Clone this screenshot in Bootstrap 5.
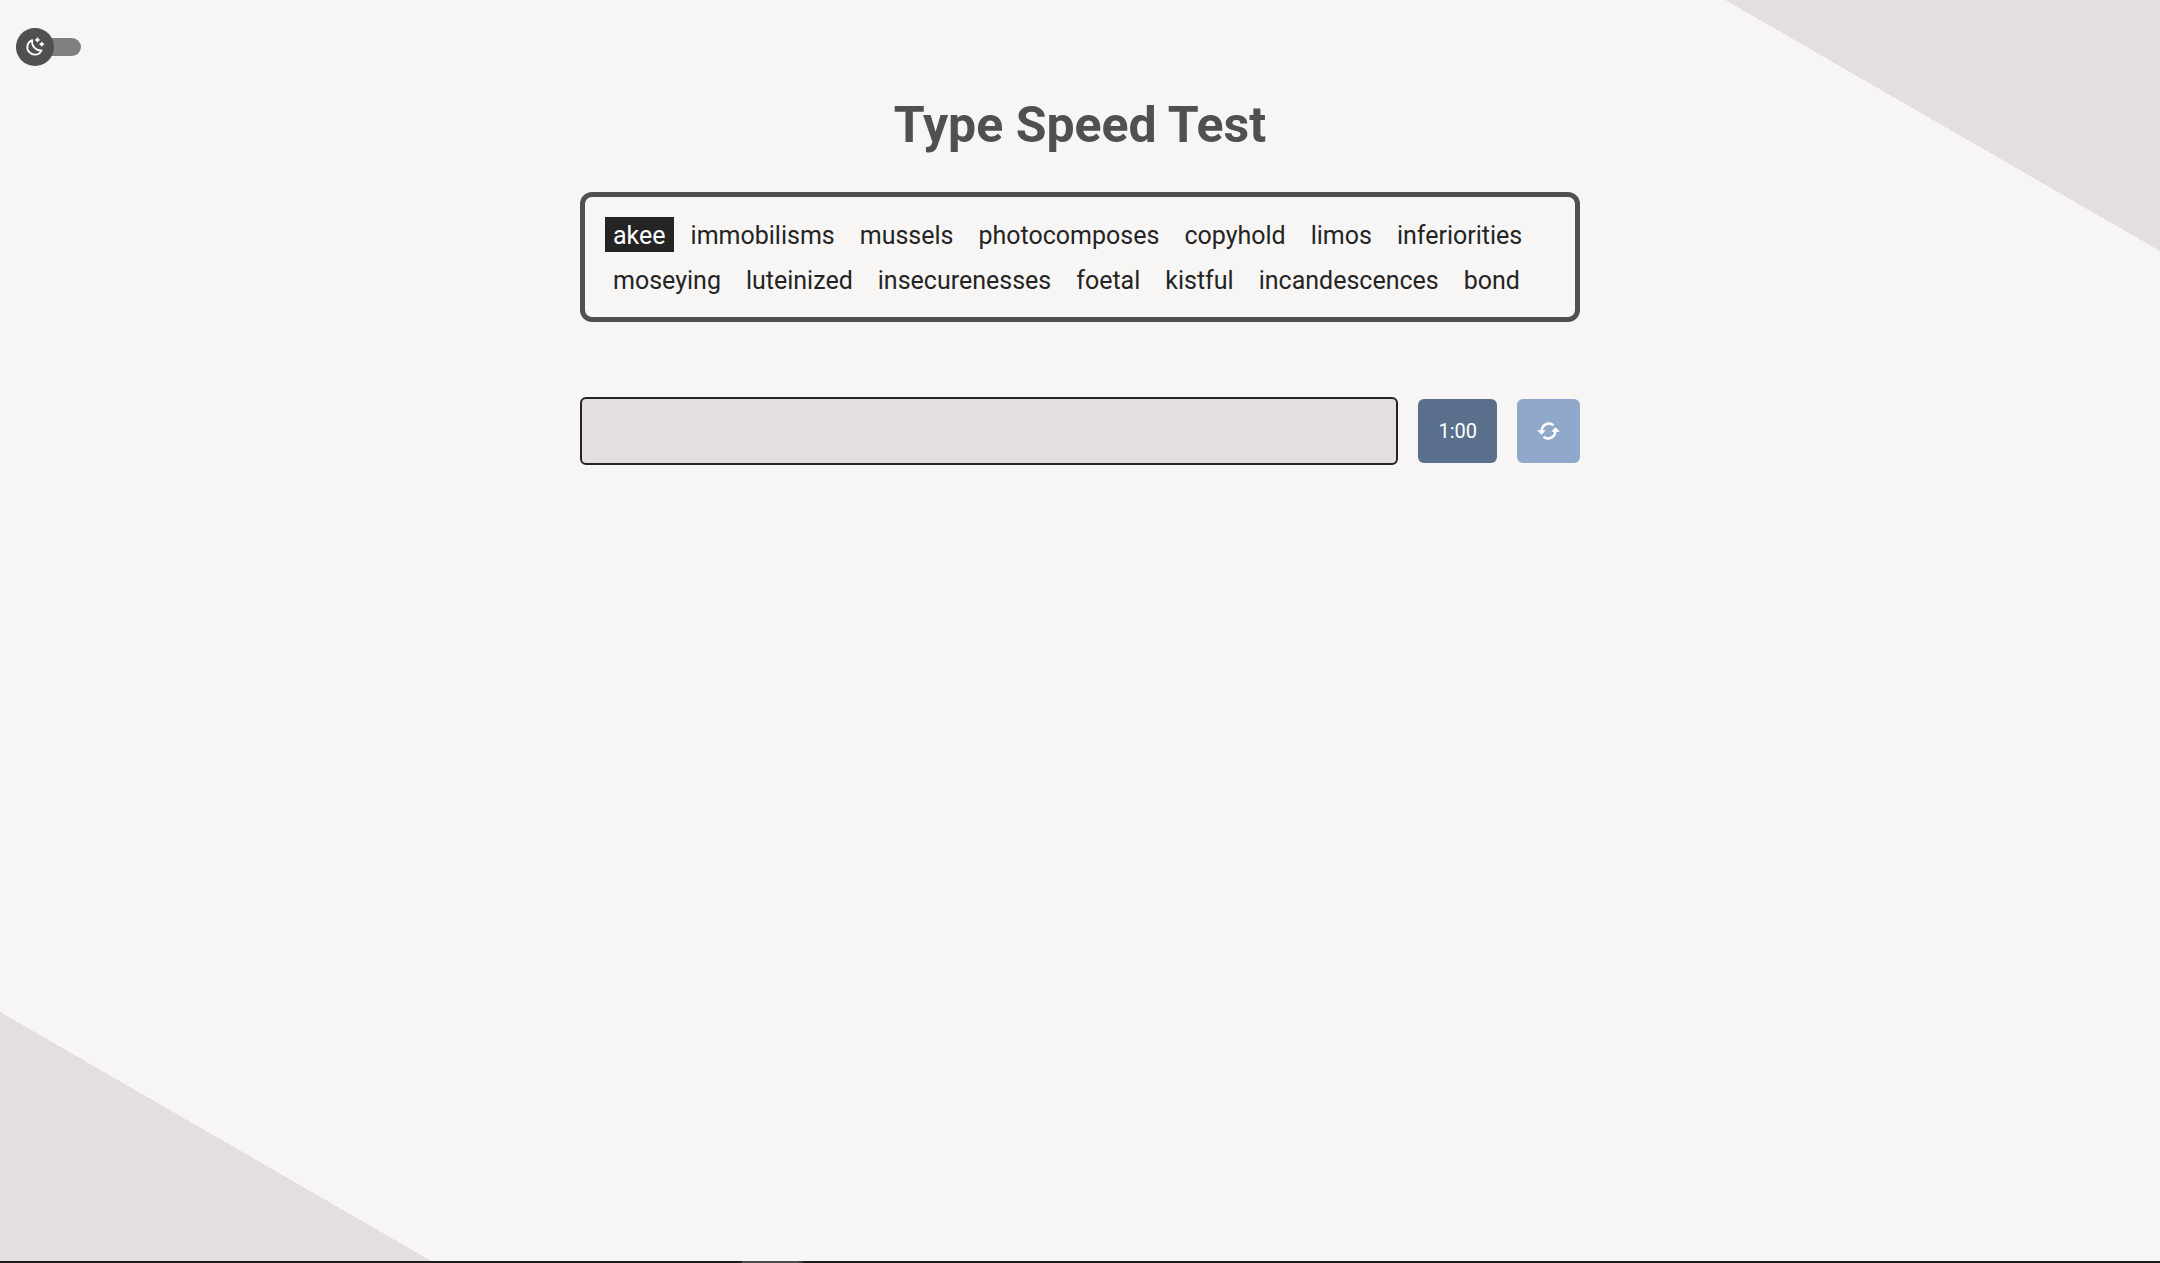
<!DOCTYPE html>
<html lang="en">
<head>
<meta charset="utf-8">
<meta name="viewport" content="width=device-width, initial-scale=1">
<title>Type Speed Test</title>
<link rel="stylesheet" href="https://cdn.jsdelivr.net/npm/bootstrap@5.3.0/dist/css/bootstrap.min.css">
<style>
  :root { --page: #f7f6f4; --shade: #e4dede; --ink: #242424; --slate: #505050; }
  body { font-family: Roboto, sans-serif; color: var(--ink); background: linear-gradient(30deg, var(--shade) 10%, var(--page) 10% 90%, var(--shade) 90%); }
  .theme-bar { padding: 28px 16px 0; }
  .theme-toggle { width: 65px; height: 38px; cursor: pointer; }
  .theme-track { height: 18px; background: #808080; border-radius: 9px; }
  .theme-knob { width: 38px; height: 38px; background: var(--slate); }
  .test-area { max-width: 1000px; }
  .test-title { font-size: 50px; line-height: 60px; font-weight: 700; color: var(--slate); margin: 29px 0 37px; }
  .word-box { border: 5px solid var(--slate); border-radius: 12px; padding: 20px; gap: 10px 9px; margin-bottom: 75px; }
  .word-item { font-size: 25px; line-height: 33px; padding: 2px 8px 0; }
  .word-item.active { background: var(--ink); color: #fff; }
  .entry-row { gap: 20px; }
  .entry-input, .entry-input:focus { height: 68px; border: 2px solid var(--ink); border-radius: 6px; background: var(--shade); font-size: 25px; box-shadow: none; }
  .tile { height: 64px; border-radius: 6px; padding: 0 20px; font-size: 20px; line-height: 30px; color: #fff; }
  .tile-time { background: #596f8c; }
  .tile-reset, .tile-reset:hover { background: #90a9cb; }
  .scroll-strip { height: 2px; background: #1c1a1c; }
  .scroll-mark { width: 61px; margin-left: 742px; background: #4d4b4d; border-right: 4px solid #3a383a; }
</style>
<script src="https://cdn.jsdelivr.net/npm/bootstrap@5.3.0/dist/js/bootstrap.bundle.min.js"></script>
</head>
<body class="min-vh-100 d-flex flex-column">
<div class="flex-grow-1">
  <header class="theme-bar d-flex">
    <label class="theme-toggle position-relative d-flex align-items-center">
      <input type="checkbox" class="visually-hidden" aria-label="Dark theme">
      <span class="theme-track w-100"></span>
      <span class="theme-knob position-absolute start-0 top-0 rounded-circle d-flex align-items-center justify-content-center">
        <svg width="20" height="20" viewBox="0 0 20 20" fill="none" stroke="#fff" stroke-width="1.8" stroke-linejoin="round" stroke-linecap="round" aria-hidden="true">
          <path d="M7.2 3.1A7.5 7.5 0 1 0 16.6 13.3C10.8 14 6.2 8.9 7.2 3.1Z"/>
          <path fill="#fff" stroke="none" d="M12.4 0l1.1 1.8 1.8 1.1-1.8 1.1-1.1 1.8-1.1-1.8-1.8-1.1 1.8-1.1zM16.8 4.4l1.1 1.7 1.7 1.1-1.7 1.1-1.1 1.7-1.1-1.7-1.7-1.1 1.7-1.1z"/>
        </svg>
      </span>
    </label>
  </header>
  <main class="test-area mx-auto">
    <h1 class="test-title text-center">Type Speed Test</h1>
    <div class="word-box d-flex flex-wrap">
      <span class="word-item active">akee</span>
      <span class="word-item">immobilisms</span>
      <span class="word-item">mussels</span>
      <span class="word-item">photocomposes</span>
      <span class="word-item">copyhold</span>
      <span class="word-item">limos</span>
      <span class="word-item">inferiorities</span>
      <span class="word-item">moseying</span>
      <span class="word-item">luteinized</span>
      <span class="word-item">insecurenesses</span>
      <span class="word-item">foetal</span>
      <span class="word-item">kistful</span>
      <span class="word-item">incandescences</span>
      <span class="word-item">bond</span>
    </div>
    <form class="entry-row d-flex align-items-center">
      <input type="text" class="form-control entry-input flex-fill" aria-label="Type the words" autocomplete="off">
      <output class="tile tile-time d-flex align-items-center" aria-label="Time left">1:00</output>
      <button type="reset" class="btn border-0 tile tile-reset d-flex align-items-center" aria-label="Restart">
        <svg width="23" height="20" viewBox="0 0 24 20" fill="none" stroke="#fff" stroke-width="2.6" aria-hidden="true">
          <path d="M5 10.4V10A7.3 7.3 0 0 1 17.2 4.2"/>
          <path d="M19 9.6V10A7.3 7.3 0 0 1 6.8 15.8"/>
          <path fill="#fff" stroke="none" d="M0 9.3H9.2L4.8 14zM24 10.7H14.8L19.2 6z"/>
        </svg>
      </button>
    </form>
  </main>
</div>
<div class="scroll-strip d-flex"><span class="scroll-mark"></span></div>
</body>
</html>
